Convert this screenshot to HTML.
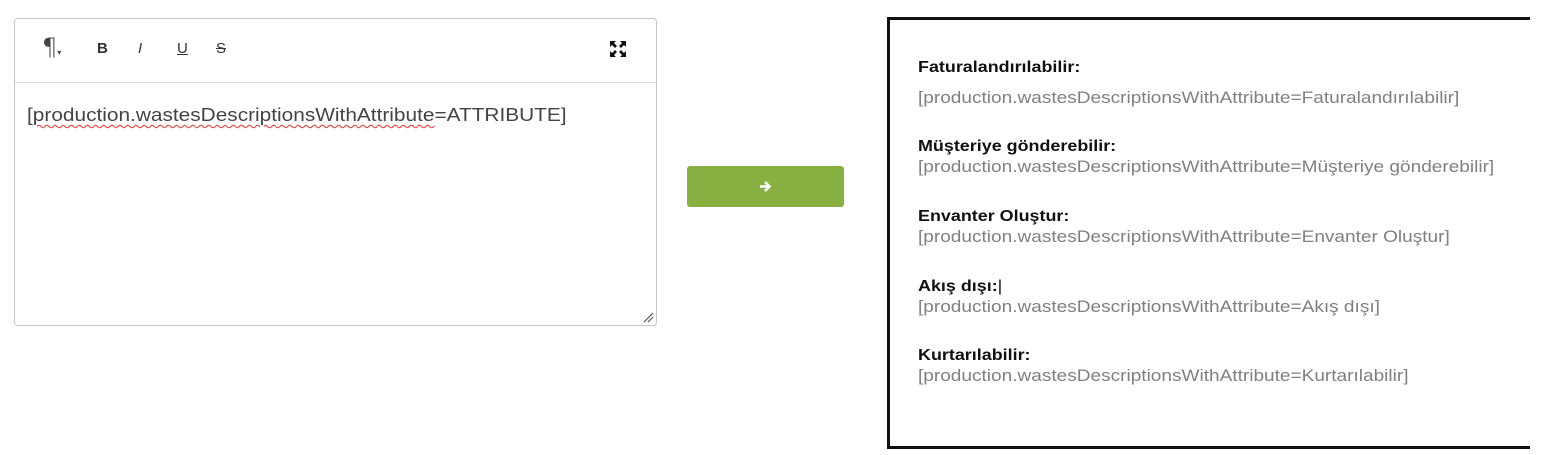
<!DOCTYPE html>
<html><head><meta charset="utf-8"><style>
body{margin:0;width:1542px;height:455px;background:#fff;position:relative;overflow:hidden;font-family:"Liberation Sans",sans-serif}
.ed{position:absolute;left:14px;top:18px;width:641px;height:306px;border:1px solid #c4c4c8;border-radius:4px}
.tb{height:63px;border-bottom:1px solid #dcdcdc;position:relative}
.tb span{position:absolute;top:21px;font-size:15px;color:#333}
.txt{position:absolute;left:12px;top:86px;font-size:18px;color:#444;white-space:nowrap;transform:scaleX(1.157);transform-origin:left}
.sq{text-decoration:underline wavy #e33;text-decoration-thickness:1px;text-underline-offset:3px}
.btn{position:absolute;left:687px;top:166px;width:157px;height:41px;background:#88b142;border-radius:3px}
.box{position:absolute;left:887px;top:17px;width:640px;height:426px;border:3px solid #111;border-right:none}
.r{position:absolute;left:918px;white-space:nowrap}
.b{font-size:16px;font-weight:bold;color:#111;transform:scaleX(1.12);transform-origin:left}
.g{font-size:17px;color:#808080;transform:scaleX(1.12);transform-origin:left}
</style></head><body>
<div class="ed">
<div class="tb">
<span style="left:27px;font-size:24px;top:14px;font-family:'DejaVu Sans';font-weight:200;color:#444">¶<small style="font-size:8px">▾</small></span>
<span style="left:82px;font-weight:bold">B</span>
<span style="left:123px;font-style:italic">I</span>
<span style="left:162px;text-decoration:underline">U</span>
<span style="left:201px;text-decoration:line-through">S</span>
<svg style="position:absolute;left:594px;top:21px" width="18" height="18" viewBox="0 0 18 18" fill="#111"><path d="M1 1h6l-2 2 3 3-2 2-3-3-2 2zM17 1v6l-2-2-3 3-2-2 3-3-2-2zM1 17v-6l2 2 3-3 2 2-3 3 2 2zM17 17h-6l2-2-3-3 2-2 3 3 2-2z"/></svg>
</div>
<div class="txt">[<span class="sq">production.wastesDescriptionsWithAttribute</span>=ATTRIBUTE]</div>
<svg style="position:absolute;right:2px;bottom:2px" width="12" height="12"><path d="M11 2L2 11M11 6L6 11" stroke="#555" stroke-width="1.2"/></svg>
</div>
<div class="btn"><svg style="position:absolute;left:72px;top:14px" width="13" height="13" viewBox="0 0 13 13"><path d="M1 6.5h9M6 2l4.5 4.5L6 11" stroke="#fff" stroke-width="2.6" fill="none"/></svg></div>
<div class="box"></div>
<div class="r b" style="top:59px">Faturalandırılabilir:</div>
<div class="r g" style="top:88px">[production.wastesDescriptionsWithAttribute=Faturalandırılabilir]</div>
<div class="r b" style="top:138px">Müşteriye gönderebilir:</div>
<div class="r g" style="top:157px">[production.wastesDescriptionsWithAttribute=Müşteriye gönderebilir]</div>
<div class="r b" style="top:208px">Envanter Oluştur:</div>
<div class="r g" style="top:227px">[production.wastesDescriptionsWithAttribute=Envanter Oluştur]</div>
<div class="r b" style="top:278px">Akış dışı:<span style="font-weight:normal">|</span></div>
<div class="r g" style="top:297px">[production.wastesDescriptionsWithAttribute=Akış dışı]</div>
<div class="r b" style="top:347px">Kurtarılabilir:</div>
<div class="r g" style="top:366px">[production.wastesDescriptionsWithAttribute=Kurtarılabilir]</div>
</body></html>
